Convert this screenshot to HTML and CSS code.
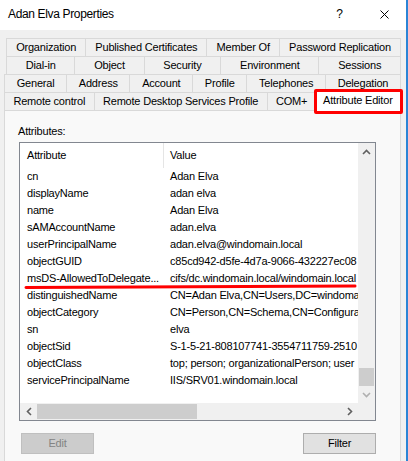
FILE: index.html
```html
<!DOCTYPE html>
<html>
<head>
<meta charset="utf-8">
<link rel="stylesheet" href="styles.css">
</head>
<body>
<div class="window">
  <div class="titlebar">
    <span class="title">Adan Elva Properties</span>
    <span class="help">?</span>
    <svg class="close" width="9" height="9" viewBox="0 0 9 9"><path d="M0.5 0.5 L8.5 8.5 M8.5 0.5 L0.5 8.5" stroke="#000" stroke-width="1" fill="none"/></svg>
  </div>
  <div class="body">
    <div class="tabs">
      <div class="tabrow back">
        <div class="tab">Organization</div>
        <div class="tab">Published Certificates</div>
        <div class="tab">Member Of</div>
        <div class="tab">Password Replication</div>
      </div>
      <div class="tabrow back">
        <div class="tab">Dial-in</div>
        <div class="tab">Object</div>
        <div class="tab">Security</div>
        <div class="tab">Environment</div>
        <div class="tab">Sessions</div>
      </div>
      <div class="tabrow">
        <div class="tab">General</div>
        <div class="tab">Address</div>
        <div class="tab">Account</div>
        <div class="tab">Profile</div>
        <div class="tab">Telephones</div>
        <div class="tab">Delegation</div>
      </div>
      <div class="tabrow">
        <div class="tab">Remote control</div>
        <div class="tab">Remote Desktop Services Profile</div>
        <div class="tab">COM+</div>
        <div class="tab sel">Attribute Editor<span class="redbox"></span></div>
      </div>
    </div>
    <div class="panel">
      <div class="label">Attributes:</div>
      <div class="listbox">
        <div class="listarea">
          <div class="lhead"><span class="c1">Attribute</span><span class="c2">Value</span></div>
          <div class="lrow"><span class="c1">cn</span><span class="c2">Adan Elva</span></div>
          <div class="lrow"><span class="c1">displayName</span><span class="c2">adan elva</span></div>
          <div class="lrow"><span class="c1">name</span><span class="c2">Adan Elva</span></div>
          <div class="lrow"><span class="c1">sAMAccountName</span><span class="c2">adan.elva</span></div>
          <div class="lrow"><span class="c1">userPrincipalName</span><span class="c2">adan.elva@windomain.local</span></div>
          <div class="lrow"><span class="c1">objectGUID</span><span class="c2">c85cd942-d5fe-4d7a-9066-432227ec08</span></div>
          <div class="lrow"><span class="c1">msDS-AllowedToDelegate...</span><span class="c2">cifs/dc.windomain.local/windomain.local</span></div>
          <div class="lrow"><span class="c1">distinguishedName</span><span class="c2">CN=Adan Elva,CN=Users,DC=windomain</span></div>
          <div class="lrow"><span class="c1">objectCategory</span><span class="c2">CN=Person,CN=Schema,CN=Configural</span></div>
          <div class="lrow"><span class="c1">sn</span><span class="c2">elva</span></div>
          <div class="lrow"><span class="c1">objectSid</span><span class="c2">S-1-5-21-808107741-3554711759-2510</span></div>
          <div class="lrow"><span class="c1">objectClass</span><span class="c2">top; person; organizationalPerson; user</span></div>
          <div class="lrow"><span class="c1">servicePrincipalName</span><span class="c2">IIS/SRV01.windomain.local</span></div>
          <svg class="mark" width="340" height="260" viewBox="0 0 340 260"><path d="M6 144.5 L335 143" stroke="#ff0000" stroke-width="3" stroke-linecap="round" fill="none"/></svg>
        </div>
        <div class="vscroll">
          <div class="sbtn"><svg width="9" height="6" viewBox="0 0 9 6"><path d="M1 5 L4.5 1.5 L8 5" stroke="#606060" stroke-width="1.6" fill="none"/></svg></div>
          <div class="vtrack"><div class="vthumb"></div></div>
          <div class="sbtn"><svg width="9" height="6" viewBox="0 0 9 6"><path d="M1 1 L4.5 4.5 L8 1" stroke="#b0b0b0" stroke-width="1.6" fill="none"/></svg></div>
        </div>
        <div class="hscroll">
          <div class="sbtn"><svg width="6" height="9" viewBox="0 0 6 9"><path d="M5 1 L1.5 4.5 L5 8" stroke="#606060" stroke-width="1.6" fill="none"/></svg></div>
          <div class="htrack"><div class="hthumb"></div></div>
          <div class="sbtn"><svg width="6" height="9" viewBox="0 0 6 9"><path d="M1 1 L4.5 4.5 L1 8" stroke="#606060" stroke-width="1.6" fill="none"/></svg></div>
        </div>
        <div class="corner"></div>
      </div>
      <div class="buttons">
        <div class="btn disabled">Edit</div>
        <div class="btn">Filter</div>
      </div>
    </div>
  </div>
</div>
</body>
</html>
```

FILE: styles.css
```css
* { box-sizing: border-box; }
html, body { margin: 0; padding: 0; }
body {
  width: 408px;
  height: 461px;
  overflow: hidden;
  font-family: "Liberation Sans", Arial, sans-serif;
  font-size: 11px;
  letter-spacing: -0.2px;
  color: #000;
  background: #ffffff;
}
.window {
  width: 408px;
  height: 461px;
  display: flex;
  flex-direction: column;
  background: #f0f0f0;
  border-right: 2px solid #2b84d6;
}
.titlebar {
  height: 30px;
  flex: 0 0 30px;
  background: #ffffff;
  display: flex;
  align-items: center;
  padding-left: 8px;
  padding-bottom: 2px;
}
.title {
  flex: 1;
  font-size: 12px;
  letter-spacing: -0.35px;
}
.help {
  font-size: 12px;
  letter-spacing: 0;
  margin-right: 37px;
}
.close {
  display: block;
  margin-right: 17px;
}
.body {
  flex: 1;
  display: flex;
  flex-direction: column;
  padding: 8px 5px 0 4px;
}
.tabs {
  display: flex;
  flex-direction: column;
}
.tabrow {
  display: flex;
  height: 18px;
  align-items: flex-start;
}
.tabrow.back { margin-left: 2px; }
.tab {
  flex: 1 1 auto;
  height: 18px;
  padding: 0 3px;
  border-top: 1px solid #d9d9d9;
  border-left: 1px solid #d9d9d9;
  background: #f0f0f0;
  text-align: center;
  line-height: 16px;
  white-space: nowrap;
}
.tab:last-child { border-right: 1px solid #d9d9d9; }
.tab.sel {
  position: relative;
  z-index: 2;
  height: 21px;
  margin: -2px -1px 0 -2px;
  background: #ffffff;
  border-right: 1px solid #d9d9d9;
  line-height: 19px;
}
.redbox {
  position: absolute;
  left: -1px;
  right: -2px;
  top: -2px;
  bottom: -3px;
  border: 3px solid #ff0000;
  border-radius: 2px;
}
.panel {
  flex: 1;
  background: #f9f9f9;
  border: 1px solid #d9d9d9;
  border-bottom: none;
  padding: 13px 0 0 14px;
}
.label {
  line-height: 14px;
  margin-left: -1px;
  margin-bottom: 4px;
}
.listbox {
  width: 357px;
  height: 279px;
  border: 1px solid #828790;
  background: #ffffff;
  display: grid;
  grid-template-columns: 1fr 17px;
  grid-template-rows: 1fr 17px;
}
.listarea {
  position: relative;
  overflow: hidden;
  white-space: nowrap;
}
.lhead {
  display: flex;
  height: 25px;
  line-height: 24px;
}
.lhead .c1 { border-right: 1px solid #e5e5e5; }
.lrow {
  display: flex;
  height: 17px;
  line-height: 17px;
}
.c1 {
  flex: 0 0 144px;
  padding-left: 7px;
  overflow: hidden;
}
.c2 {
  padding-left: 6px;
}
.mark {
  position: absolute;
  left: 0;
  top: 0;
}
.vscroll {
  background: #f0f0f0;
  display: flex;
  flex-direction: column;
}
.sbtn {
  flex: 0 0 17px;
  width: 17px;
  height: 17px;
  display: flex;
  align-items: center;
  justify-content: center;
}
.vtrack {
  flex: 1;
  display: flex;
  flex-direction: column;
  justify-content: flex-end;
  padding: 0 1px;
}
.vthumb {
  height: 18px;
  background: #cdcdcd;
}
.hscroll {
  background: #f0f0f0;
  display: flex;
}
.htrack {
  flex: 1;
  display: flex;
  padding: 1px 0;
}
.hthumb {
  width: 160px;
  background: #cdcdcd;
}
.corner { background: #f0f0f0; }
.buttons {
  width: 357px;
  display: flex;
  justify-content: space-between;
  margin-top: 12px;
}
.btn {
  width: 73px;
  height: 21px;
  border: 1px solid #adadad;
  background: #e1e1e1;
  text-align: center;
  line-height: 19px;
}
.btn.disabled {
  margin-left: 2px;
  background: #cccccc;
  border-color: #bfbfbf;
  color: #838383;
}
```
